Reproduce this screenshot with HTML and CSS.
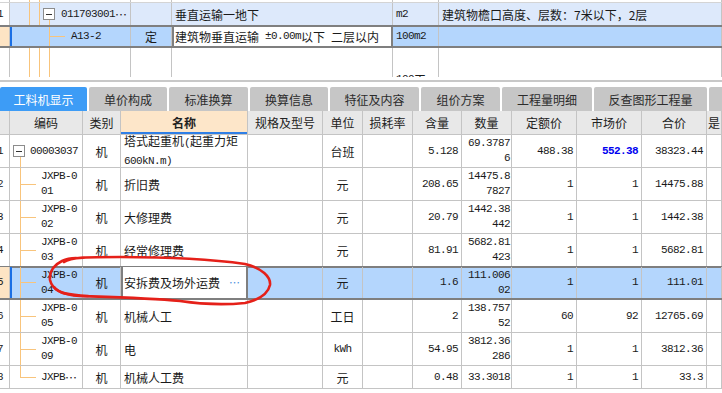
FILE: index.html
```html
<!DOCTYPE html>
<html lang="zh">
<head>
<meta charset="utf-8">
<title>工料机显示</title>
<link rel="stylesheet" href="styles.css">
</head>
<body>
<div class="top">
  <div class="trow r0">
    <div class="tc rn"></div><div class="tc tree tr-a"></div><div class="tc"></div><div class="tc"></div><div class="tc"></div><div class="tc"></div>
  </div>
  <div class="trow r1">
    <div class="tc rn"><span class="lat">1</span></div>
    <div class="tc tree tr-p"><span class="box"></span><span class="lat">011703001</span><span class="ell">…</span></div>
    <div class="tc"></div>
    <div class="tc">垂直运输一地下</div>
    <div class="tc"><span class="lat">m2</span></div>
    <div class="tc">建筑物檐口高度、层数：7米以下，2层</div>
  </div>
  <div class="trow r2">
    <div class="tc rn"></div>
    <div class="tc tree tr-c"><span class="lat">A13-2</span></div>
    <div class="tc ctr">定</div>
    <div class="tc edit">建筑物垂直运输<span class="lat pre"> ±0.00m</span>以下<span class="lat pre"> </span>二层以内</div>
    <div class="tc"><span class="lat">100m2</span></div>
    <div class="tc"></div>
  </div>
  <div class="trow r3">
    <div class="tc rn"></div><div class="tc tree tr-b"></div><div class="tc"></div><div class="tc"></div>
    <div class="tc low"><span class="lat">100</span>工</div><div class="tc"></div>
  </div>
</div>
<div class="sep"></div>
<div class="tabs">
  <div class="tab on tw87">工料机显示</div>
  <div class="tab tw78">单价构成</div>
  <div class="tab tw79">标准换算</div>
  <div class="tab tw78">换算信息</div>
  <div class="tab tw89">特征及内容</div>
  <div class="tab tw79">组价方案</div>
  <div class="tab tw90">工程量明细</div>
  <div class="tab tw113">反查图形工程量</div>
  <div class="tab tw40"></div>
</div>
<div class="grid">
  <div class="row head">
    <div class="c"></div><div class="c ctr">编码</div><div class="c ctr">类别</div><div class="c ctr act">名称</div><div class="c ctr">规格及型号</div><div class="c ctr">单位</div><div class="c ctr">损耗率</div><div class="c ctr">含量</div><div class="c ctr">数量</div><div class="c ctr">定额价</div><div class="c ctr">市场价</div><div class="c ctr">合价</div><div class="c hl">是</div>
  </div>
  <div class="row">
    <div class="c rn"><span class="lat">1</span></div>
    <div class="c code root"><span class="box"></span><span class="lat">00003037</span></div>
    <div class="c ctr">机</div>
    <div class="c"><span>塔式起重机<span class="lat">(</span>起重力矩<br><span class="lat">600kN.m)</span></span></div>
    <div class="c"></div><div class="c ctr">台班</div><div class="c"></div>
    <div class="c rt"><span class="num">5.128</span></div>
    <div class="c rt q"><span class="num">69.3787<br>6</span></div>
    <div class="c rt"><span class="num">488.38</span></div>
    <div class="c rt"><span class="num blue">552.38</span></div>
    <div class="c rt"><span class="num">38323.44</span></div>
    <div class="c"></div>
  </div>
  <div class="row">
    <div class="c rn"><span class="lat">2</span></div>
    <div class="c code kid"><span class="lat">JXPB-0<br>01</span></div>
    <div class="c ctr">机</div><div class="c"><span>折旧费</span></div>
    <div class="c"></div><div class="c ctr">元</div><div class="c"></div>
    <div class="c rt"><span class="num">208.65</span></div>
    <div class="c rt q"><span class="num">14475.8<br>7827</span></div>
    <div class="c rt"><span class="num">1</span></div>
    <div class="c rt"><span class="num">1</span></div>
    <div class="c rt"><span class="num">14475.88</span></div>
    <div class="c"></div>
  </div>
  <div class="row">
    <div class="c rn"><span class="lat">3</span></div>
    <div class="c code kid"><span class="lat">JXPB-0<br>02</span></div>
    <div class="c ctr">机</div><div class="c"><span>大修理费</span></div>
    <div class="c"></div><div class="c ctr">元</div><div class="c"></div>
    <div class="c rt"><span class="num">20.79</span></div>
    <div class="c rt q"><span class="num">1442.38<br>442</span></div>
    <div class="c rt"><span class="num">1</span></div>
    <div class="c rt"><span class="num">1</span></div>
    <div class="c rt"><span class="num">1442.38</span></div>
    <div class="c"></div>
  </div>
  <div class="row presel">
    <div class="c rn"><span class="lat">4</span></div>
    <div class="c code kid"><span class="lat">JXPB-0<br>03</span></div>
    <div class="c ctr">机</div><div class="c"><span>经常修理费</span></div>
    <div class="c"></div><div class="c ctr">元</div><div class="c"></div>
    <div class="c rt"><span class="num">81.91</span></div>
    <div class="c rt q"><span class="num">5682.81<br>423</span></div>
    <div class="c rt"><span class="num">1</span></div>
    <div class="c rt"><span class="num">1</span></div>
    <div class="c rt"><span class="num">5682.81</span></div>
    <div class="c"></div>
  </div>
  <div class="row sel">
    <div class="c rn"><span class="lat">5</span></div>
    <div class="c code kid"><span class="lat">JXPB-0<br>04</span></div>
    <div class="c ctr">机</div>
    <div class="c edit"><span>安拆费及场外运费</span><span class="more">…</span></div>
    <div class="c"></div><div class="c ctr">元</div><div class="c"></div>
    <div class="c rt"><span class="num">1.6</span></div>
    <div class="c rt q"><span class="num">111.006<br>02</span></div>
    <div class="c rt"><span class="num">1</span></div>
    <div class="c rt"><span class="num">1</span></div>
    <div class="c rt"><span class="num">111.01</span></div>
    <div class="c"></div>
  </div>
  <div class="row">
    <div class="c rn"><span class="lat">6</span></div>
    <div class="c code kid"><span class="lat">JXPB-0<br>05</span></div>
    <div class="c ctr">机</div><div class="c"><span>机械人工</span></div>
    <div class="c"></div><div class="c ctr">工日</div><div class="c"></div>
    <div class="c rt"><span class="num">2</span></div>
    <div class="c rt q"><span class="num">138.757<br>52</span></div>
    <div class="c rt"><span class="num">60</span></div>
    <div class="c rt"><span class="num">92</span></div>
    <div class="c rt"><span class="num">12765.69</span></div>
    <div class="c"></div>
  </div>
  <div class="row">
    <div class="c rn"><span class="lat">7</span></div>
    <div class="c code kid"><span class="lat">JXPB-0<br>09</span></div>
    <div class="c ctr">机</div><div class="c"><span>电</span></div>
    <div class="c"></div><div class="c ctr"><span class="lat">kWh</span></div><div class="c"></div>
    <div class="c rt"><span class="num">54.95</span></div>
    <div class="c rt q"><span class="num">3812.36<br>286</span></div>
    <div class="c rt"><span class="num">1</span></div>
    <div class="c rt"><span class="num">1</span></div>
    <div class="c rt"><span class="num">3812.36</span></div>
    <div class="c"></div>
  </div>
  <div class="row one">
    <div class="c rn"><span class="lat">8</span></div>
    <div class="c code last"><span class="lat">JXPB</span><span class="ell">…</span></div>
    <div class="c ctr">机</div><div class="c"><span>机械人工费</span></div>
    <div class="c"></div><div class="c ctr">元</div><div class="c"></div>
    <div class="c rt"><span class="num">0.48</span></div>
    <div class="c rt q"><span class="num">33.3018</span></div>
    <div class="c rt"><span class="num">1</span></div>
    <div class="c rt"><span class="num">1</span></div>
    <div class="c rt"><span class="num">33.3</span></div>
    <div class="c"></div>
  </div>
</div>
<svg class="mark" width="722" height="393" viewBox="0 0 722 393" aria-hidden="true">
  <path d="M64,262 C70,257 90,257 120,257 C160,257 210,259 245,264 C262,268 271,277 270,285 C268,294 258,300 245,303 C225,305 200,304 180,301 C150,298 110,297 80,296 C62,295 52,289 50,280 C49,271 54,265 62,261 C66,259 70,258 76,258"/>
  <path d="M54,287 C58,293 68,295 88,296"/>
</svg>
</body>
</html>
```

FILE: styles.css
```css
* { box-sizing: border-box; margin: 0; padding: 0; }
html, body { width: 722px; height: 393px; overflow: hidden; }
body {
  position: relative;
  background: #fff;
  font-family: "Noto Sans CJK SC", "Noto Sans", sans-serif;
  font-size: 12px;
  line-height: 15px;
  color: #1a1a1a;
}
.lat, .num {
  font-family: "Liberation Mono", "DejaVu Sans Mono", monospace;
  font-size: 11px;
  letter-spacing: -0.6px;
}
.pre { white-space: pre; }
.ell { font-family: "Noto Sans CJK SC", sans-serif; font-size: 12px; color: #222; }

/* ---------- top panel ---------- */
.top { height: 77px; overflow: hidden; }
.trow { display: grid; grid-template-columns: 10px 121px 41px 221px 46px 1fr; }
.tc {
  border-right: 1px solid #c4c4c4;
  display: flex;
  align-items: center;
  white-space: nowrap;
  overflow: hidden;
  padding-left: 3px;
}
.tc.ctr { justify-content: center; padding-left: 0; }
.r0 { height: 3px; border-bottom: 1px solid #d4d4d4; }
.r1 { height: 22px; background: #dde9fb; }
.r1 .rn { background: #fff; }
.r2 {
  height: 23px;
  background: #b4d6fd;
  border-top: 2px solid #7f7f7f;
  border-bottom: 2px solid #7f7f7f;
}
.r2 .rn { background: #fde4c4; }
.r3 { height: 29px; }
.rn { padding-left: 0; }
.rn span { margin-left: -3px; }

.tree { padding-left: 0; }
.tr-a {
  background:
    linear-gradient(#f8c47c, #f8c47c) 19px 0 / 1px 100% no-repeat,
    linear-gradient(#f8c47c, #f8c47c) 29px 0 / 1px 100% no-repeat;
}
.tr-p {
  background:
    linear-gradient(#f8c47c, #f8c47c) 19px 0 / 1px 100% no-repeat,
    linear-gradient(#f8c47c, #f8c47c) 29px 0 / 1px 100% no-repeat,
    linear-gradient(#f8c47c, #f8c47c) 39px 17px / 1px 100% no-repeat;
}
.tr-p .box { margin-left: 33px; margin-right: 6px; }
.tr-c {
  padding-left: 61px;
  box-shadow: inset 2px 0 0 #1b6fe4;
  background:
    linear-gradient(#f8c47c, #f8c47c) 39px 0 / 1px 100% no-repeat,
    linear-gradient(#f8c47c, #f8c47c) 39px 50% / 16px 1px no-repeat;
}
.tr-b {
  background:
    linear-gradient(#f8c47c, #f8c47c) 19px 0 / 1px 100% no-repeat,
    linear-gradient(#f8c47c, #f8c47c) 29px 0 / 1px 100% no-repeat,
    linear-gradient(#f8c47c, #f8c47c) 39px 0 / 1px 100% no-repeat;
}
.tc.edit {
  background: #fff;
  border-left: 2px solid #7f7f7f;
  border-right: 2px solid #7f7f7f;
  padding-left: 1px;
}
.tc.low { align-items: flex-start; padding-top: 24px; }

.box {
  flex: none;
  width: 12px;
  height: 12px;
  border: 1px solid #8c8c8c;
  background: linear-gradient(#333, #333) center / 6px 1px no-repeat, #fff;
}

/* ---------- tabs ---------- */
.sep { height: 2px; background: #c8c8c8; margin: 3px 0 5px; }
.tabs { display: flex; gap: 2px; height: 24px; }
.tab {
  flex: none;
  background: #c6c6c6;
  color: #2b2b2b;
  border-radius: 2px 2px 0 0;
  display: flex;
  align-items: center;
  justify-content: center;
  white-space: nowrap;
}
.tab.on { background: #3d9cf6; color: #fff; }
.tw87 { width: 87px; }
.tw78 { width: 78px; }
.tw79 { width: 79px; }
.tw89 { width: 89px; }
.tw90 { width: 90px; }
.tw113 { width: 113px; }
.tw40 { width: 40px; }

/* ---------- grid ---------- */
.row {
  display: grid;
  grid-template-columns: 10px 73px 38px 127px 75px 40px 50px 49px 50px 65px 65px 65px 1fr;
  height: 33px;
  border-bottom: 1px solid #c4c4c4;
}
.row.one { height: 23px; }
.row.head { height: 24px; background: #e8e8e8; color: #222; }
.c {
  border-right: 1px solid #c4c4c4;
  display: flex;
  align-items: center;
  padding: 0 3px;
  overflow: hidden;
  white-space: nowrap;
}
.c.ctr { justify-content: center; padding: 0; }
.c.rt { justify-content: flex-end; text-align: right; padding-right: 3px; }
.c.q { padding-right: 1px; }
.c.rn { padding: 0; }
.c.hl { padding: 0 0 0 1px; }
.head .act {
  background: #fde6c9;
  font-weight: 700;
  box-shadow: inset 0 -2px 0 #2f7fe6;
}
.blue { color: #0000f0; font-weight: 700; }

.code { padding-left: 31px; }
.code.root {
  padding-left: 3px;
  background: linear-gradient(#f8c47c, #f8c47c) 10px 22px / 1px 100% no-repeat;
}
.code.root .box { margin-right: 5px; }
.code.kid {
  background:
    linear-gradient(#f8c47c, #f8c47c) 10px 0 / 1px 100% no-repeat,
    linear-gradient(#f8c47c, #f8c47c) 10px 50% / 16px 1px no-repeat;
}
.code.last {
  background:
    linear-gradient(#f8c47c, #f8c47c) 10px 0 / 1px 50% no-repeat,
    linear-gradient(#f8c47c, #f8c47c) 10px 50% / 16px 1px no-repeat;
}

.row.presel { border-bottom-color: #7f7f7f; }
.row.sel {
  background: #b4d6fd;
  border-bottom: 2px solid #7f7f7f;
  box-shadow: inset 0 1px 0 #7f7f7f;
}
.sel .rn { background: #fde4c4; }
.sel .code { box-shadow: inset 2px 0 0 #1b6fe4; }
.c.edit {
  background: #fff;
  border-left: 2px solid #7f7f7f;
  border-right: 2px solid #7f7f7f;
  padding-left: 1px;
}
.more { margin-left: auto; margin-right: 3px; color: #4b8fe0; font-size: 11px; }

/* ---------- hand-drawn red mark ---------- */
.mark { position: absolute; left: 0; top: 0; pointer-events: none; }
.mark path {
  fill: none;
  stroke: #e52019;
  stroke-width: 2.6;
  stroke-linecap: round;
  stroke-linejoin: round;
}
```
